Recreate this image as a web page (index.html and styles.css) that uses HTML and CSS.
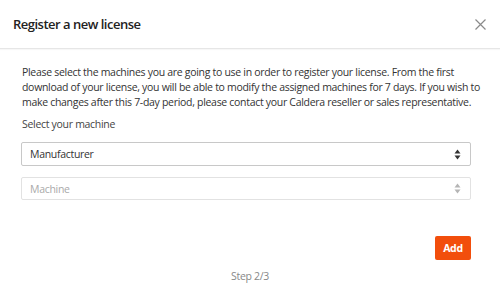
FILE: index.html
```html
<!DOCTYPE html>
<html lang="en">
<head>
    <meta charset="UTF-8">
    <title>Register a new license</title>
    <link rel="stylesheet" href="styles.css">
</head>
<body>

<div class="modal">
    <!-- Hlavička -->
    <header class="modal-header">
        <h2>Register a new license</h2>
        <button class="close-button" title="Close">
            <svg width="11" height="11" viewBox="0 0 11 11">
                <path d="M0.5 0.5 L10.5 10.5 M10.5 0.5 L0.5 10.5" stroke="#8a8a8a" stroke-width="1.2" fill="none"/>
            </svg>
        </button>
    </header>

    <!-- Obsah -->
    <div class="modal-body">
        <p class="intro">Please select the machines you are going to use in order to register your license. From the first download of your license, you will be able to modify the assigned machines for 7 days. If you wish to make changes after this 7-day period, please contact your Caldera reseller or sales representative.</p>
        <p class="label">Select your machine</p>

        <div class="select">
            <span>Manufacturer</span>
            <svg class="arrows" width="7" height="11" viewBox="0 0 7 11">
                <path d="M3.5 0.5 L6.5 4.5 L0.5 4.5 Z M3.5 10.5 L6.5 6.5 L0.5 6.5 Z" fill="#333"/>
            </svg>
        </div>
        <div class="select disabled">
            <span>Machine</span>
            <svg class="arrows" width="7" height="11" viewBox="0 0 7 11">
                <path d="M3.5 0.5 L6.5 4.5 L0.5 4.5 Z M3.5 10.5 L6.5 6.5 L0.5 6.5 Z" fill="#b5b5b5"/>
            </svg>
        </div>

        <div class="actions">
            <button class="btn-add">Add</button>
        </div>
    </div>

    <div class="step">Step 2/3</div>
</div>

</body>
</html>
```

FILE: styles.css
```css
body {
    font-family: "Open Sans", "Liberation Sans", sans-serif;
    background-color: #fff;
    color: #333;
    margin: 0;
    padding: 0;
    letter-spacing: -0.3px;
}

.modal {
    width: 500px;
    height: 297px;
    display: flex;
    flex-direction: column;
}

/* Hlavička */
.modal-header {
    height: 48px;
    padding: 0 13px;
    display: flex;
    justify-content: space-between;
    align-items: center;
    border-bottom: 1px solid #e6e6e6;
    box-shadow: 0 1px 1px rgba(0, 0, 0, 0.03);
}
.modal-header h2 {
    margin: 0 0 1px 0;
    font-size: 13px;
    font-weight: 600;
    letter-spacing: -0.5px;
    color: #222;
}
.close-button {
    background: none;
    border: none;
    padding: 0;
    margin-right: 1px;
    display: flex;
    cursor: pointer;
}

/* Obsah */
.modal-body {
    padding: 16px 15px 0 21px;
}
.intro {
    margin: 0 0 7px 1px;
    font-size: 10.5px;
    line-height: 15px;
    color: #333;
}
.label {
    margin: 0 0 10px 1px;
    font-size: 10.5px;
    line-height: 15px;
    color: #444;
}
.select {
    width: 450px;
    height: 24px;
    box-sizing: border-box;
    border: 1px solid #c8c8c8;
    border-radius: 2px;
    padding: 0 9px 0 8px;
    display: flex;
    justify-content: space-between;
    align-items: center;
    font-size: 10.5px;
    color: #333;
    margin-bottom: 11px;
}
.select.disabled {
    border-color: #e2e2e2;
    color: #aaa;
    height: 23px;
}

/* Tlačítko (margin se slučuje s okrajem selectu) */
.actions {
    width: 450px;
    display: flex;
    justify-content: flex-end;
    margin-top: 36px;
}
.btn-add {
    background-color: #f24e0c;
    color: white;
    border: none;
    width: 36px;
    height: 24px;
    padding: 0;
    border-radius: 2px;
    font-family: inherit;
    font-size: 10.5px;
    font-weight: 700;
    letter-spacing: inherit;
    cursor: pointer;
}

.step {
    margin-top: 9px;
    text-align: center;
    font-size: 10.5px;
    color: #888;
}
```
